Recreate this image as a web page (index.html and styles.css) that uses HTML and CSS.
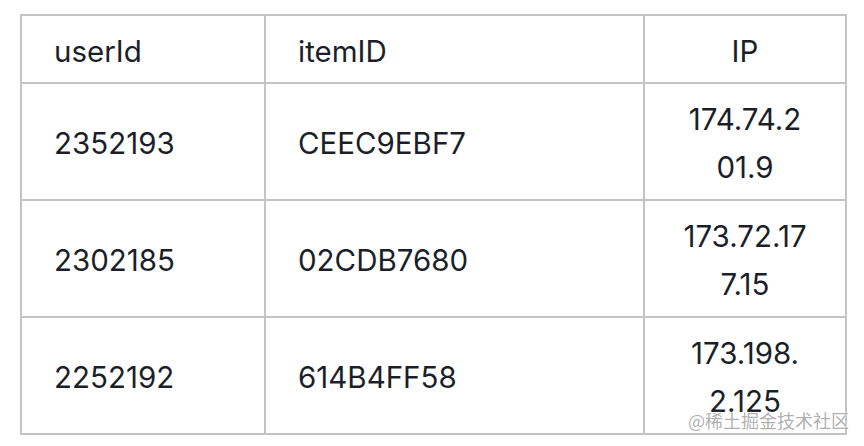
FILE: index.html
```html
<!DOCTYPE html>
<html lang="zh-CN">
<head>
<meta charset="utf-8">
<title>table</title>
<link rel="stylesheet" href="styles.css">
</head>
<body>
<div class="page">
  <table class="data">
    <colgroup>
      <col class="c1">
      <col class="c2">
      <col class="c3">
    </colgroup>
    <thead>
      <tr><th class="left">userId</th><th class="left">itemID</th><th class="center">IP</th></tr>
    </thead>
    <tbody>
      <tr><td class="left">2352193</td><td class="left">CEEC9EBF7</td><td class="center">174.74.2<br>01.9</td></tr>
      <tr><td class="left">2302185</td><td class="left">02CDB7680</td><td class="center">173.72.17<br>7.15</td></tr>
      <tr><td class="left">2252192</td><td class="left">614B4FF58</td><td class="center">173.198.<br>2.125</td></tr>
    </tbody>
  </table>
  <div class="mark">@稀土掘金技术社区</div>
</div>
</body>
</html>
```
FILE: styles.css
```css
html, body {
  margin: 0;
  padding: 0;
  background: #ffffff;
}
.page {
  position: relative;
  width: 864px;
  height: 446px;
  padding: 14px 0 0 20px;
  box-sizing: border-box;
}
.data {
  border-collapse: collapse;
  table-layout: fixed;
  width: 825px;
  font-family: Inter, "Noto Sans", sans-serif;
  font-size: 29.5px;
  line-height: 48px;
  color: #1c1f2a;
}
.c1 { width: 244px; }
.c2 { width: 379px; }
.c3 { width: 202px; }
.data th, .data td {
  border: 2px solid #c4c4c4;
  padding: 11px 32px 8px;
  font-weight: 400;
  vertical-align: middle;
  white-space: nowrap;
}
.data th { height: 48px; padding-bottom: 7px; }
.data td { height: 96px; }
.left { text-align: left; }
.center { text-align: center; }
.mark {
  position: absolute;
  right: 15px;
  bottom: 16px;
  font-family: "Noto Sans CJK SC", sans-serif;
  font-size: 18px;
  line-height: 20px;
  color: rgba(150, 150, 150, 0.75);
  text-shadow: 0 0 2px #ffffff;
}
```
